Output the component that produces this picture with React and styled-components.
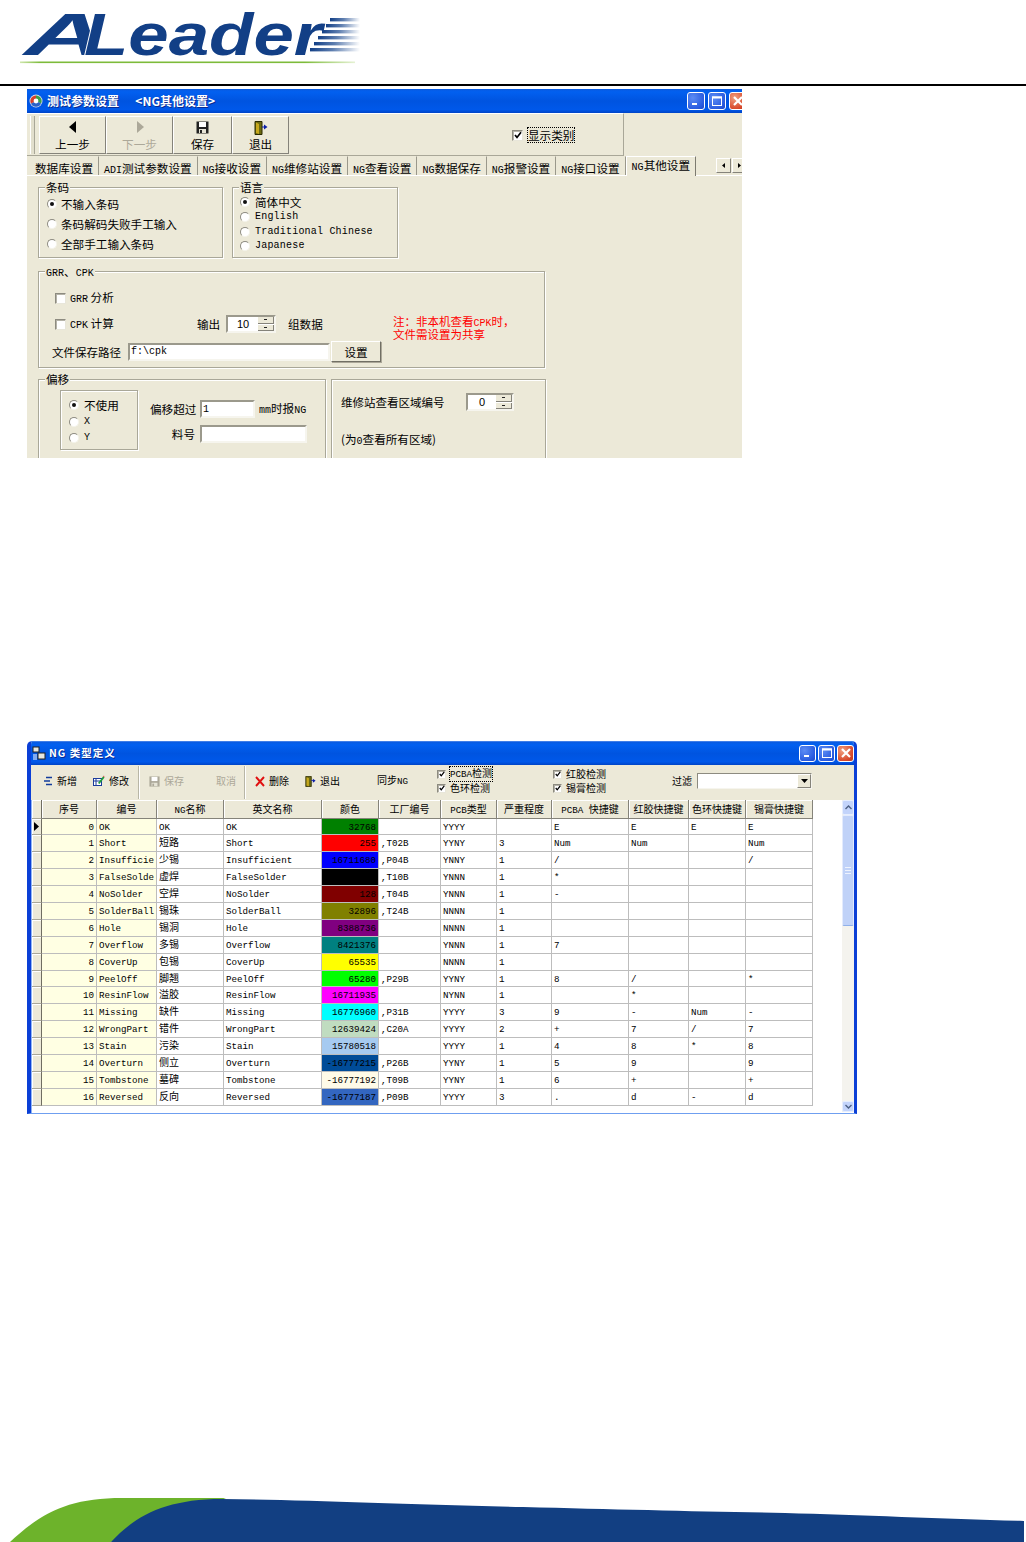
import React from "react";
import styled, { createGlobalStyle } from "styled-components";

const Global = createGlobalStyle`
  html, body { margin: 0; padding: 0; background: #fff; }
  body { font-family: "Noto Sans CJK SC", "Liberation Sans", sans-serif; color: #000; }
  * { box-sizing: border-box; }
`;

const Page = styled.div`
  width: 1026px; height: 1542px; display: flex; flex-direction: column; overflow: hidden;
`;
const Header = styled.header`height: 84px; flex-shrink: 0;`;
const Rule = styled.div`height: 2px; background: #000; flex-shrink: 0;`;
const Footer = styled.footer`margin-top: auto; height: 62px; svg { display: block; }`;

const L = styled.span`
  font-family: "Liberation Mono", monospace; font-size: 10px;
  letter-spacing: ${p => p.$sp ?? 0}px;
`;
const GL = styled.span`font-family: "Liberation Mono", monospace; font-size: 9.2px;`;

/* ---------- XP window chrome ---------- */
const TitleBar = styled.div`
  height: ${p => p.$h}px; flex-shrink: 0; display: flex; align-items: center;
  padding-left: ${p => p.$pad}px; padding-bottom: 1px; color: #fff; font-weight: 700;
  font-size: ${p => p.$fs}px; line-height: 14px; text-shadow: 1px 1px 0 #0a2a90;
  letter-spacing: ${p => p.$ls ?? 0}px;
  background: linear-gradient(#0a5be0, #0260f0 12%, #0054e0 50%, #0058ea 86%, #0044c6);
`;
const TitleText = styled.span`margin-left: ${p => p.$ml ?? 4}px; white-space: pre; flex: 1;`;
const Controls = styled.div`display: flex; gap: ${p => p.$gap}px; margin-right: ${p => p.$mr}px; flex-shrink: 0;`;
const Ctl = styled.div`
  width: ${p => p.$s}px; height: ${p => p.$s}px; border: 1px solid #fff; border-radius: 3px;
  display: flex; align-items: center; justify-content: center;
  background: ${p => p.$close
    ? "radial-gradient(circle at 30% 30%, #f0a080, #d8482a 70%, #b83a20)"
    : "radial-gradient(circle at 30% 30%, #5c8cf4, #2a5ce0 70%, #1c48c8)"};
`;
const WinControls = ({ s, gap, mr }) => (
  <Controls $gap={gap} $mr={mr}>
    <Ctl $s={s}><svg width="10" height="10" viewBox="0 0 10 10"><rect x="1" y="7" width="5" height="2" fill="#fff" /></svg></Ctl>
    <Ctl $s={s}><svg width="12" height="12" viewBox="0 0 12 12"><rect x="1.5" y="2" width="9" height="8.5" fill="none" stroke="#fff" /><rect x="1" y="1.5" width="10" height="2" fill="#fff" /></svg></Ctl>
    <Ctl $s={s} $close><svg width="12" height="12" viewBox="0 0 12 12"><path d="M2 2L10 10M10 2L2 10" stroke="#fff" strokeWidth="2.2" /></svg></Ctl>
  </Controls>
);

/* ---------- form parts ---------- */
const Box = styled.span`
  width: ${p => p.$s}px; height: ${p => p.$s}px; flex-shrink: 0; background: #fff;
  border: 1px solid; border-color: #8d8b80 #e8e6da #e8e6da #8d8b80;
  box-shadow: inset 1px 1px 0 #b5b3a8; display: inline-flex; align-items: center; justify-content: center;
`;
const Dot = styled.span`
  width: 10px; height: 10px; border-radius: 50%; flex-shrink: 0; background: #fff;
  border: 1px solid; border-color: #8d8b80 #f4f3ea #f4f3ea #8d8b80;
  display: inline-flex; align-items: center; justify-content: center;
  &::after { content: ""; width: 4px; height: 4px; border-radius: 50%; background: ${p => p.$on ? "#111" : "transparent"}; }
`;
const Check = ({ on, s = 11 }) => (
  <Box $s={s}>{on && <svg width={s - 3} height={s - 3} viewBox="0 0 8 8"><path d="M1 4l2 2.4L7 1.2" fill="none" stroke="#000" strokeWidth="1.7" /></svg>}</Box>
);
const Opt = styled.label`
  display: flex; align-items: center; gap: ${p => p.$gap ?? 5}px; height: ${p => p.$h}px; white-space: pre; flex-shrink: 0;
`;
const Group = styled.div`
  position: relative; width: ${p => p.$w}px; height: ${p => p.$h}px; flex-shrink: 0;
  border: 1px solid #a9a798; box-shadow: 1px 1px 0 #fff, inset 1px 1px 0 #fff;
  padding: ${p => p.$pad};
`;
const Legend = styled.div`
  position: absolute; left: 6px; top: -8px; padding: 0 1px; background: #ece9d8; line-height: 14px;
`;
const Sunken = styled.input`
  width: ${p => p.$w}px; height: 18px; flex-shrink: 0; padding: 0 1px; margin: 0; outline: none;
  background: #fff; border: 2px solid; border-color: #9b998c #f6f5ee #f6f5ee #9b998c;
  font: 10px/14px "Liberation Mono", monospace; color: #000;
`;
const SpinWrap = styled.div`
  width: ${p => p.$w}px; height: 18px; display: flex; background: #fff; flex-shrink: 0;
  border: 2px solid; border-color: #9b998c #f6f5ee #f6f5ee #9b998c;
`;
const SpinValue = styled.span`flex: 1; text-align: center; line-height: 14px; font-family: "Liberation Sans", sans-serif; font-size: 11px;`;
const SpinBtns = styled.div`width: 16px; display: flex; flex-direction: column; gap: 1px;`;
const SpinBtn = styled.div`
  flex: 1; background: #ece9d8; border-bottom: 1px solid #85837a; border-right: 1px solid #85837a;
  display: flex; align-items: center; justify-content: center;
  &::after { content: ""; width: 3px; height: 1px; background: #222; }
`;
const Spin = ({ w, v }) => (
  <SpinWrap $w={w}><SpinValue>{v}</SpinValue><SpinBtns><SpinBtn /><SpinBtn /></SpinBtns></SpinWrap>
);

/* ---------- window 1 ---------- */
const SettingsWin = styled.section`
  width: 715px; height: 369px; margin: 3px 0 0 27px; flex-shrink: 0; overflow: hidden;
  display: flex; flex-direction: column; background: #ece9d8; font-size: 11.6px; line-height: 14px;
`;
const ToolStrip = styled.div`
  height: 43px; flex-shrink: 0; width: 597px; display: flex; align-items: flex-start; padding-top: 2px;
  border-right: 1px solid #a9a798; border-bottom: 1px solid #a9a798; border-top: 1px solid #fff;
`;
const Gripper = styled.div`
  width: 5px; height: 38px; margin: 0 4px 0 3px; border-left: 1px solid #fff; border-right: 1px solid #a9a798; background: #e2dfcd;
`;
const BigBtn = styled.div`
  width: ${p => p.$w}px; height: 38px; flex-shrink: 0; display: flex; flex-direction: column; align-items: center; justify-content: space-between;
  padding: 4px 0 2px; border: 1px solid; border-color: #fff #85837a #85837a #fff; color: ${p => p.$off ? "#aca899" : "#000"};
  svg { display: block; }
`;
const ShowType = styled.div`display: flex; align-items: center; gap: 5px; margin: 12px 0 0 223px;`;
const Focused = styled.span`outline: 1px dotted #000; padding: 0;`;
const TabStrip = styled.div`
  height: 20px; flex-shrink: 0; display: flex; padding-left: 3px; border-bottom: 1px solid #fff; white-space: nowrap;
`;
const Tab = styled.div`
  padding: ${p => p.$on ? "1px 5px 0" : "4px 5px 0"}; flex-shrink: 0; line-height: 14px; height: ${p => p.$on ? 20 : 19}px;
  border-right: 1px solid ${p => p.$on ? "#7d7b70" : "#9a988b"}; border-top: 1px solid ${p => p.$on ? "#fff" : "transparent"};
  ${p => p.$on && "background: #ece9d8; border-left: 1px solid #fff;"}
`;
const TabArrows = styled.div`display: flex; gap: 1px; margin: 2px 0 0 20px; flex-shrink: 0;`;
const TabArrow = styled.div`
  width: 15px; height: 15px; display: flex; align-items: center; justify-content: center;
  border: 1px solid; border-color: #fff #85837a #85837a #fff;
`;
const Form = styled.div`padding: 11px 0 0 11px;`;
const FormRow = styled.div`display: flex; gap: ${p => p.$gap}px; margin-bottom: ${p => p.$mb ?? 0}px;`;
const OptCol = styled.div`display: flex; flex-direction: column;`;
const GrrRow = styled.div`
  display: grid; grid-template-columns: 142px 29px 62px 105px auto; grid-template-rows: 18px; align-items: center;
  height: 18px; margin-top: 8px; padding-left: 16px;
`;
const Line = styled.div`
  display: flex; align-items: center; height: ${p => p.$h ?? 18}px; padding-left: ${p => p.$pl ?? 0}px; margin-top: ${p => p.$mt ?? 0}px;
`;
const RedNote = styled.div`color: #f00; font-size: 11.5px; line-height: 11px; white-space: nowrap; margin-top: 7px;`;
const PathLabel = styled.span`width: 76px; flex-shrink: 0; white-space: nowrap; font-size: 11.5px;`;
const PushBtn = styled.div`
  width: 50px; height: 21px; margin-left: 1px; display: flex; align-items: center; justify-content: center; flex-shrink: 0;
  border: 1px solid; border-color: #fff #716f64 #716f64 #fff; box-shadow: 1px 1px 0 #aca899;
`;
const OffsetBox = styled.div`
  width: 78px; height: 60px; flex-shrink: 0; padding: 6px 0 0 8px;
  border: 1px solid #a9a798; box-shadow: 1px 1px 0 #fff, inset 1px 1px 0 #fff;
`;
const OffsetFields = styled.div`
  display: grid; grid-template-columns: 45px auto; grid-template-rows: 18px 18px; column-gap: 5px; row-gap: 7px;
  margin: 10px 0 0 12px; align-items: center; align-self: flex-start;
`;
const FieldLabel = styled.span`text-align: right; white-space: nowrap;`;
const FieldLine = styled.div`display: flex; align-items: center; gap: 4px; white-space: nowrap;`;
const OffsetGroupInner = styled.div`display: flex;`;
const RepairLabel = styled.span`width: 125px; flex-shrink: 0; white-space: nowrap; font-size: 11.5px;`;
const Gap = styled.div`height: ${p => p.$h}px;`;

/* ---------- window 2 ---------- */
const TypesWin = styled.section`
  width: 830px; height: 373px; margin: 283px 0 0 27px; flex-shrink: 0; overflow: hidden; display: flex; flex-direction: column;
  background: #ece9d8; border-left: 4px solid #0b3fd6; border-right: 3px solid #0b3fd6; border-bottom: 1px solid #6f9ff0;
  border-top: 1px solid #3f7ee8; border-radius: 5px 5px 0 0; font-size: 10px; line-height: 12px;
`;
const Tools = styled.div`height: 35px; flex-shrink: 0; display: flex; align-items: center; white-space: nowrap; padding-bottom: 3px;`;
const Tool = styled.div`
  display: flex; align-items: center; gap: 4px; flex-shrink: 0; margin-left: ${p => p.$ml}px;
  color: ${p => p.$off ? "#aca899" : "#000"}; svg { display: block; flex-shrink: 0; }
`;
const ToolSep = styled.div`
  width: 2px; height: 33px; flex-shrink: 0; margin-left: ${p => p.$ml}px; margin-top: 3px; border-left: 1px solid #b8b6a6; border-right: 1px solid #fff;
`;
const CheckCol = styled.div`width: ${p => p.$w}px; margin-left: ${p => p.$ml ?? 0}px; flex-shrink: 0; display: flex; flex-direction: column;`;
const Combo = styled.div`
  width: 115px; height: 16px; margin-left: 5px; flex-shrink: 0; background: #fff; display: flex; justify-content: flex-end;
  border: 1px solid; border-color: #8d8b80 #f6f5ee #f6f5ee #8d8b80;
`;
const ComboBtn = styled.div`
  width: 14px; background: #ece9d8; border: 1px solid; border-color: #fff #85837a #85837a #fff; display: flex; align-items: center; justify-content: center;
`;
const GridArea = styled.div`flex: 1; display: flex; background: #fff; padding-left: 1px; box-shadow: inset 1px 0 0 #8fb4f4; min-height: 0;`;
const Grid = styled.div`
  width: 781px; flex-shrink: 0; display: grid; align-content: start;
  grid-template-columns: 10px 55px 60px 67px 98px 57px 62px 56px 55px 77px 60px 57px 67px;
  grid-template-rows: 18.5px repeat(17, 16.9px);
`;
const HeadCell = styled.div`
  background: #ece9d8; text-align: center; line-height: 17px; white-space: nowrap; overflow: hidden;
  border-right: 1px solid #85837a; border-bottom: 1px solid #85837a; box-shadow: inset 1px 1px 0 #fff;
`;
const RowMark = styled.div`
  background: #ece9d8; border-right: 1px solid #6f6d62; border-bottom: 1px solid #a9a798; box-shadow: inset 1px 1px 0 #fff;
  display: flex; align-items: center; justify-content: center;
`;
const Cell = styled.div`
  background: ${p => p.$bg || "#fff"}; text-align: ${p => p.$right ? "right" : "left"};
  padding: 0 ${p => p.$right ? 2 : 0}px 0 ${p => p.$right ? 0 : 2}px; line-height: 13px; white-space: nowrap; overflow: hidden;
  border-right: 1px solid #bdbdbd; border-bottom: 1px solid #bdbdbd;
`;
const Scroll = styled.div`
  width: 12px; margin-left: auto; flex-shrink: 0; height: 312px; display: flex; flex-direction: column; background: #f4f3ee;
`;
const ScrollBtn = styled.div`
  height: ${p => p.$h}px; flex-shrink: 0; background: #c3d4fb; border: 1px solid #e6eefe; border-radius: 2px;
  display: flex; align-items: center; justify-content: center;
`;
const Thumb = styled.div`
  height: 111px; flex-shrink: 0; background: #c0d2f8; border: 1px solid #e3ebfd; border-bottom: 1px solid #8fb0ea;
  display: flex; align-items: center; justify-content: center; border-radius: 2px;
`;
const Grip = styled.div`width: 6px; height: 7px; border-top: 1px solid #eef3fe; border-bottom: 1px solid #eef3fe;
  &::after { content: ""; display: block; height: 1px; margin-top: 2px; background: #eef3fe; }
`;
const Track = styled.div`flex: 1;`;

/* ---------- icons ---------- */
const Tri = ({ dir, color }) => (
  <svg width="10" height="12" viewBox="0 0 10 12"><path d={dir === "l" ? "M8 0V12L1 6Z" : "M2 0V12L9 6Z"} fill={color} /></svg>
);
const Floppy = ({ s = 13, c = "#222" }) => (
  <svg width={s} height={s} viewBox="0 0 13 13">
    <path d="M0.5 0.5H12.5V12.5H0.5Z" fill={c} />
    <rect x="3" y="1" width="7" height="5" fill="#fff" />
    <rect x="3" y="8" width="7" height="4" fill="#e6e4d6" />
    <rect x="4" y="9" width="2" height="3" fill={c} />
  </svg>
);
const Door = ({ s = 14 }) => (
  <svg width={s} height={s} viewBox="0 0 14 14">
    <path d="M1 0.5H8V13.5H1Z" fill="#6c6a12" stroke="#2a2a00" strokeWidth="1" />
    <path d="M2 1.5L5 3V13L2 12Z" fill="#c6a81e" />
    <path d="M8 5.5H10V3.5L13.5 6L10 8.5V6.5H8Z" fill="#0a1ea8" />
  </svg>
);
const Chevron = ({ up }) => (
  <svg width="7" height="5" viewBox="0 0 7 5"><path d={up ? "M0.5 4L3.5 1L6.5 4" : "M0.5 1L3.5 4L6.5 1"} fill="none" stroke="#4d6185" strokeWidth="1.4" /></svg>
);
const DownTri = () => <svg width="7" height="4" viewBox="0 0 7 4"><path d="M0 0H7L3.5 4Z" fill="#000" /></svg>;

const Logo = () => (
  <svg width="400" height="84" viewBox="0 0 400 84">
    <defs>
      <linearGradient id="spd" x1="0" x2="1" y1="0" y2="0">
        <stop offset="0" stopColor="#123f86" />
        <stop offset="0.45" stopColor="#5f7fb0" />
        <stop offset="1" stopColor="#fff" />
      </linearGradient>
      <linearGradient id="grn" x1="0" x2="1" y1="0" y2="0">
        <stop offset="0" stopColor="#cfe6ad" />
        <stop offset="0.06" stopColor="#7dbb3a" />
        <stop offset="0.85" stopColor="#7dbb3a" />
        <stop offset="1" stopColor="#e6f2d4" />
      </linearGradient>
    </defs>
    <text y="54.5" fontFamily="Liberation Sans" fontWeight="700" fontStyle="italic" fontSize="60" fill="#123f86">
      <tspan x="24" textLength="82" lengthAdjust="spacingAndGlyphs">A</tspan>
      <tspan x="84" textLength="238" lengthAdjust="spacingAndGlyphs" stroke="#fff" strokeWidth="1.6" paintOrder="stroke">Leader</tspan>
    </text>
    {[18, 24, 30, 36, 42, 48].map((y, i) => (
      <rect key={y} x={330 - i * 4} y={y} width={30 + i * 4} height="3.4" fill="url(#spd)" />
    ))}
    <rect x="20" y="61.5" width="335" height="1.6" fill="url(#grn)" />
  </svg>
);
const Wave = () => (
  <svg width="1026" height="62" viewBox="0 0 1026 62">
    <path d="M10 62C42 32 70 18 122 18L226 18L111 62Z" fill="#6db32b" />
    <path d="M111 62C135 36 165 19 222 19C300 20 400 24 523 27C620 29.5 700 31.5 785 33C860 35 950 39 1024 41V62Z" fill="#123f82" />
  </svg>
);

/* ---------- data ---------- */
const rows = [
  ["OK", "OK", "OK", "32768", "#008000", "", "YYYY", "", "E", "E", "E", "E"],
  ["Short", "短路", "Short", "255", "#ff0000", ",T02B", "YYNY", "3", "Num", "Num", "", "Num"],
  ["Insufficie", "少锡", "Insufficient", "16711680", "#0000ff", ",P04B", "YNNY", "1", "/", "", "", "/"],
  ["FalseSolde", "虚焊", "FalseSolder", "0", "#000000", ",T10B", "YNNN", "1", "*", "", "", ""],
  ["NoSolder", "空焊", "NoSolder", "128", "#800000", ",T04B", "YNNN", "1", "-", "", "", ""],
  ["SolderBall", "锡珠", "SolderBall", "32896", "#808000", ",T24B", "NNNN", "1", "", "", "", ""],
  ["Hole", "锡洞", "Hole", "8388736", "#800080", "", "NNNN", "1", "", "", "", ""],
  ["Overflow", "多锡", "Overflow", "8421376", "#008080", "", "YNNN", "1", "7", "", "", ""],
  ["CoverUp", "包锡", "CoverUp", "65535", "#ffff00", "", "NNNN", "1", "", "", "", ""],
  ["PeelOff", "脚翘", "PeelOff", "65280", "#00ff00", ",P29B", "YYNY", "1", "8", "/", "", "*"],
  ["ResinFlow", "溢胶", "ResinFlow", "16711935", "#ff00ff", "", "NYNN", "1", "", "*", "", ""],
  ["Missing", "缺件", "Missing", "16776960", "#00ffff", ",P31B", "YYYY", "3", "9", "-", "Num", "-"],
  ["WrongPart", "错件", "WrongPart", "12639424", "#c0dcc0", ",C20A", "YYYY", "2", "+", "7", "/", "7"],
  ["Stain", "污染", "Stain", "15780518", "#a6caf0", "", "YYYY", "1", "4", "8", "*", "8"],
  ["Overturn", "侧立", "Overturn", "-16777215", "#004c98", ",P26B", "YYNY", "1", "5", "9", "", "9"],
  ["Tombstone", "墓碑", "Tombstone", "-16777192", "#fffbe8", ",T09B", "YYNY", "1", "6", "+", "", "+"],
  ["Reversed", "反向", "Reversed", "-16777187", "#3366c0", ",P09B", "YYYY", "3", ".", "d", "-", "d"],
];
const YELLOW = "#ffffe3";

const Row = ({ r, i }) => (
  <>
    <RowMark>{i === 0 && <svg width="5" height="9" viewBox="0 0 5 9"><path d="M0 0L5 4.5L0 9Z" fill="#000" /></svg>}</RowMark>
    <Cell $bg={YELLOW} $right><GL>{i}</GL></Cell>
    <Cell $bg={YELLOW}><GL>{r[0]}</GL></Cell>
    <Cell>{r[1] === "OK" ? <GL>OK</GL> : r[1]}</Cell>
    <Cell><GL>{r[2]}</GL></Cell>
    <Cell $bg={r[4]} $right><GL>{r[3]}</GL></Cell>
    {r.slice(5).map((v, k) => <Cell key={k}><GL>{v}</GL></Cell>)}
  </>
);

export default function App() {
  return (
    <Page>
      <Global />
      <Header><Logo /></Header>
      <Rule />

      <SettingsWin>
        <TitleBar $h={24} $pad={2} $fs={12}>
          <svg width="14" height="14" viewBox="0 0 14 14">
            <circle cx="7" cy="7" r="6.5" fill="#d8dce8" />
            <path d="M7 1.5A5.5 5.5 0 0 1 12 9.5L7 7Z" fill="#3aa048" />
            <path d="M12 9.5A5.5 5.5 0 0 1 2 9.5L7 7Z" fill="#2a62c8" />
            <path d="M2 9.5A5.5 5.5 0 0 1 7 1.5V7Z" fill="#d8402a" />
            <circle cx="7" cy="7" r="2.4" fill="#fff" />
          </svg>
          <TitleText>测试参数设置      &lt;NG其他设置&gt;</TitleText>
          <WinControls s={18} gap={3} mr={-5} />
        </TitleBar>
        <ToolStrip>
          <Gripper />
          <BigBtn $w={67}><Tri dir="l" color="#000" /><span>上一步</span></BigBtn>
          <BigBtn $w={67} $off><Tri dir="r" color="#aca899" /><span>下一步</span></BigBtn>
          <BigBtn $w={59}><Floppy /><span>保存</span></BigBtn>
          <BigBtn $w={57}><Door /><span>退出</span></BigBtn>
          <ShowType><Check on /><Focused>显示类别</Focused></ShowType>
        </ToolStrip>
        <TabStrip>
          <Tab>数据库设置</Tab>
          <Tab><L>ADI</L>测试参数设置</Tab>
          <Tab><L>NG</L>接收设置</Tab>
          <Tab><L>NG</L>维修站设置</Tab>
          <Tab><L>NG</L>查看设置</Tab>
          <Tab><L>NG</L>数据保存</Tab>
          <Tab><L>NG</L>报警设置</Tab>
          <Tab><L>NG</L>接口设置</Tab>
          <Tab $on><L>NG</L>其他设置</Tab>
          <TabArrows>
            <TabArrow><svg width="3" height="5" viewBox="0 0 3 5"><path d="M3 0V5L0 2.5Z" /></svg></TabArrow>
            <TabArrow><svg width="3" height="5" viewBox="0 0 3 5"><path d="M0 0V5L3 2.5Z" /></svg></TabArrow>
          </TabArrows>
        </TabStrip>
        <Form>
          <FormRow $gap={9} $mb={13}>
            <Group $w={185} $h={71} $pad="6px 0 0 8px">
              <Legend>条码</Legend>
              <OptCol>
                <Opt $h={20} $gap={4}><Dot $on />不输入条码</Opt>
                <Opt $h={20} $gap={4}><Dot />条码解码失败手工输入</Opt>
                <Opt $h={20} $gap={4}><Dot />全部手工输入条码</Opt>
              </OptCol>
            </Group>
            <Group $w={166} $h={71} $pad="7px 0 0 7px">
              <Legend>语言</Legend>
              <OptCol>
                <Opt $h={14.7}><Dot $on />简体中文</Opt>
                <Opt $h={14.7}><Dot /><L $sp={0.2}>English</L></Opt>
                <Opt $h={14.7}><Dot /><L $sp={0.2}>Traditional Chinese</L></Opt>
                <Opt $h={14.7}><Dot /><L $sp={0.2}>Japanese</L></Opt>
              </OptCol>
            </Group>
          </FormRow>
          <Group $w={507} $h={97} $pad="9px 0 0 0">
            <Legend><L>GRR</L>、<L>CPK</L></Legend>
            <Line $pl={16} $h={18} $mt={8}>
              <Opt $h={18} $gap={4}><Check /><span><L>GRR</L> 分析</span></Opt>
            </Line>
            <GrrRow>
              <Opt $h={18} $gap={4}><Check /><span><L>CPK</L> 计算</span></Opt>
              <span>输出</span>
              <Spin w={50} v="10" />
              <span>组数据</span>
              <RedNote>注：非本机查看<L>CPK</L>时，<br />文件需设置为共享</RedNote>
            </GrrRow>
            <Line $pl={13} $h={21} $mt={8}>
              <PathLabel>文件保存路径</PathLabel>
              <Sunken $w={202} defaultValue="f:\cpk" />
              <PushBtn>设置</PushBtn>
            </Line>
          </Group>
          <Gap $h={11} />
          <FormRow $gap={5}>
            <Group $w={288} $h={100} $pad="10px 0 0 21px">
              <Legend>偏移</Legend>
              <OffsetGroupInner>
                <OffsetBox>
                  <OptCol>
                    <Opt $h={16}><Dot $on />不使用</Opt>
                    <Opt $h={17}><Dot /><L>X</L></Opt>
                    <Opt $h={15}><Dot /><L>Y</L></Opt>
                  </OptCol>
                </OffsetBox>
                <OffsetFields>
                  <FieldLabel>偏移超过</FieldLabel>
                  <FieldLine><Sunken $w={55} defaultValue="1" /><span><L>mm</L>时报<L>NG</L></span></FieldLine>
                  <FieldLabel>料号</FieldLabel>
                  <FieldLine><Sunken $w={107} /></FieldLine>
                </OffsetFields>
              </OffsetGroupInner>
            </Group>
            <Group $w={215} $h={100} $pad="13px 0 0 9px">
              <Line $h={18}>
                <RepairLabel>维修站查看区域编号</RepairLabel>
                <Spin w={48} v="0" />
              </Line>
              <Gap $h={20} />
              <Line $h={18}><span>(为<L>0</L>查看所有区域)</span></Line>
            </Group>
          </FormRow>
        </Form>
      </SettingsWin>

      <TypesWin>
        <TitleBar $h={23} $pad={1} $fs={10.5} $ls={1}>
          <svg width="14" height="14" viewBox="0 0 14 14">
            <rect x="1" y="1" width="6" height="5" fill="#e8e8e0" stroke="#222" />
            <rect x="6" y="7" width="7" height="6" fill="#e8e8e0" stroke="#222" />
            <path d="M1 9H5M1 11H5M1 13H5" stroke="#fff" />
          </svg>
          <TitleText $ml={3}>NG 类型定义</TitleText>
          <WinControls s={17} gap={2} mr={0} />
        </TitleBar>
        <Tools>
          <Tool $ml={12}>
            <svg width="10" height="10" viewBox="0 0 10 10"><path d="M3 1.5H9M1 5H7M3 8.5H9" stroke="#123c9c" strokeWidth="1.6" /></svg>
            新增
          </Tool>
          <Tool $ml={16}>
            <svg width="12" height="12" viewBox="0 0 12 12"><rect x="0.5" y="3.5" width="8" height="7" fill="#fff" stroke="#1c3c9c" /><path d="M0.5 6H8.5M3 3.5V10.5" stroke="#1c3c9c" /><path d="M5 8L10 1.5L11.5 2.5L6.5 9Z" fill="#1c9a3c" /><path d="M10 1.5L11.5 2.5L11 0.5Z" fill="#d8302a" /></svg>
            修改
          </Tool>
          <ToolSep $ml={9} />
          <Tool $ml={9} $off><Floppy s={11} c="#aca899" />保存</Tool>
          <Tool $ml={32} $off>取消</Tool>
          <ToolSep $ml={8} />
          <Tool $ml={9}>
            <svg width="10" height="11" viewBox="0 0 10 11"><path d="M1 1L9 10M9 1L1 10" stroke="#e01010" strokeWidth="1.9" /></svg>
            删除
          </Tool>
          <Tool $ml={16}><Door s={11} />退出</Tool>
          <Tool $ml={37}><span>同步<GL>NG</GL></span></Tool>
          <CheckCol $w={116} $ml={29}>
            <Opt $h={14} $gap={4}><Check on s={9} /><Focused><GL>PCBA</GL>检测</Focused></Opt>
            <Opt $h={14} $gap={4}><Check on s={9} />色环检测</Opt>
          </CheckCol>
          <CheckCol $w={119}>
            <Opt $h={14} $gap={4}><Check on s={9} />红胶检测</Opt>
            <Opt $h={14} $gap={4}><Check on s={9} />锡膏检测</Opt>
          </CheckCol>
          <Tool $ml={0}>过滤</Tool>
          <Combo><ComboBtn><DownTri /></ComboBtn></Combo>
        </Tools>
        <GridArea>
          <Grid>
            <RowMark />
            <HeadCell>序号</HeadCell>
            <HeadCell>编号</HeadCell>
            <HeadCell><GL>NG</GL>名称</HeadCell>
            <HeadCell>英文名称</HeadCell>
            <HeadCell>颜色</HeadCell>
            <HeadCell>工厂编号</HeadCell>
            <HeadCell><GL>PCB</GL>类型</HeadCell>
            <HeadCell>严重程度</HeadCell>
            <HeadCell><GL>PCBA </GL>快捷键</HeadCell>
            <HeadCell>红胶快捷键</HeadCell>
            <HeadCell>色环快捷键</HeadCell>
            <HeadCell>锡膏快捷键</HeadCell>
            {rows.map((r, i) => <Row key={i} r={r} i={i} />)}
          </Grid>
          <Scroll>
            <ScrollBtn $h={15}><Chevron up /></ScrollBtn>
            <Thumb><Grip /></Thumb>
            <Track />
            <ScrollBtn $h={11}><Chevron /></ScrollBtn>
          </Scroll>
        </GridArea>
      </TypesWin>

      <Footer><Wave /></Footer>
    </Page>
  );
}
